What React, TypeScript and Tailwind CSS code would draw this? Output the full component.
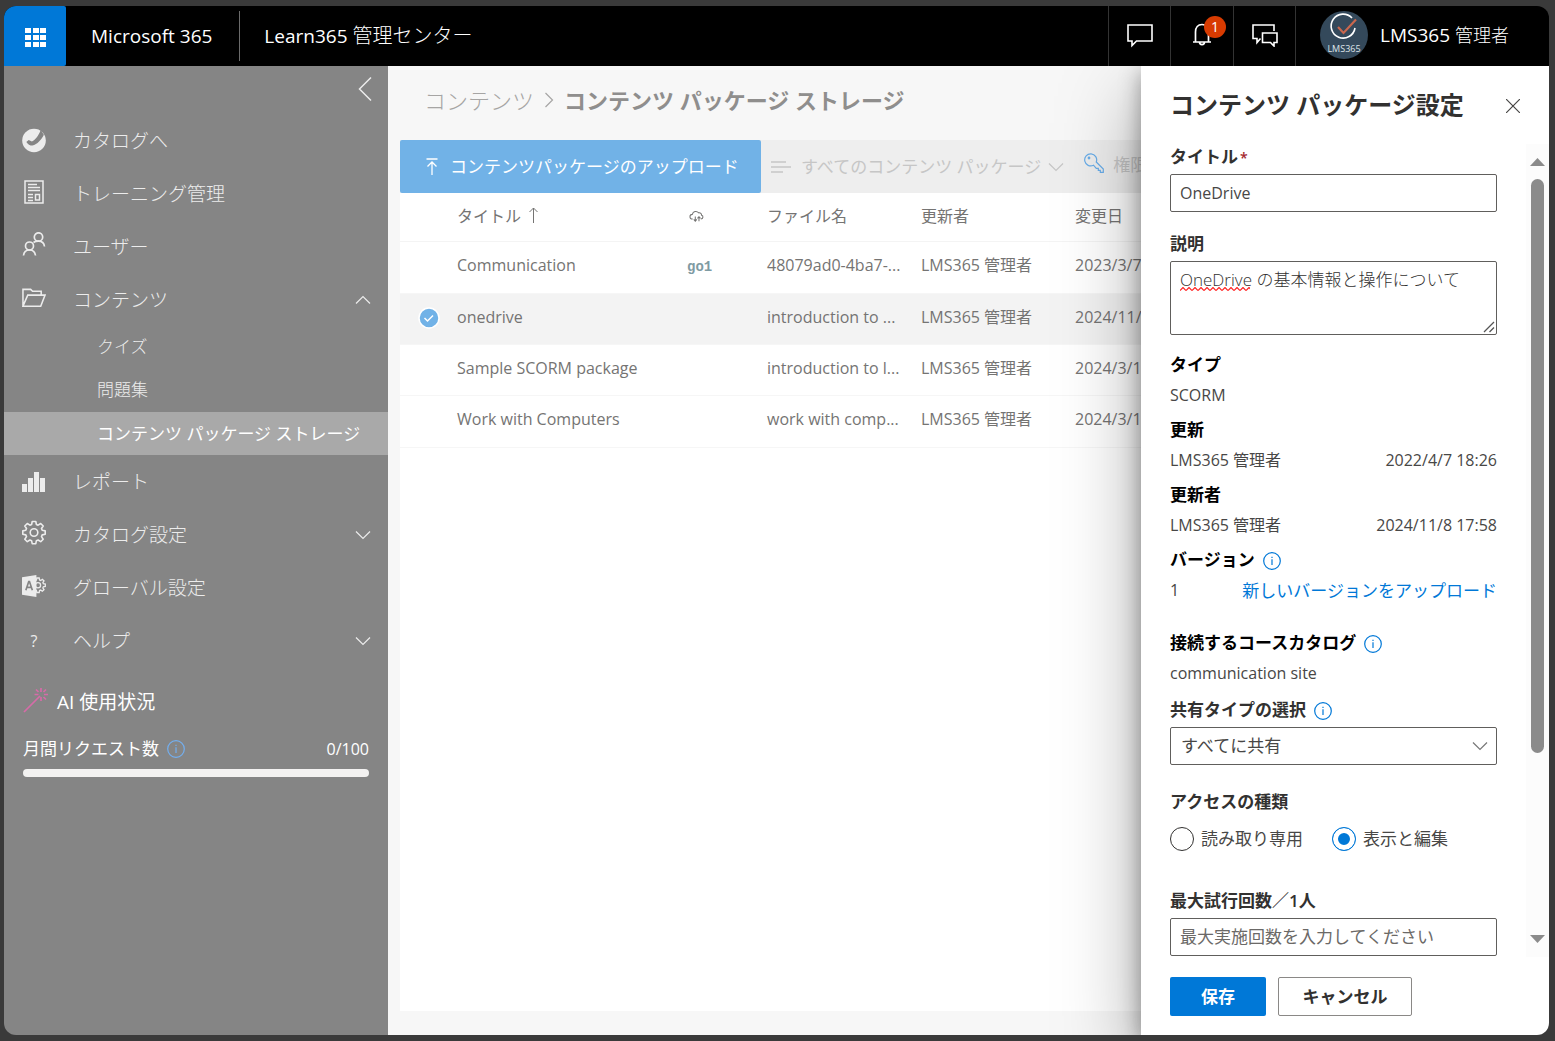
import React from "react";
import clsx from "clsx";

const ChevronIcon = ({ className }: { className?: string }) => (
	<svg viewBox="0 0 16 10" className={clsx("h-2.5 w-4", className)} fill="none" stroke="currentColor" strokeWidth="1.2">
		<path d="M1 1.5 8 8.5 15 1.5" />
	</svg>
);

const InfoIcon = ({ className }: { className?: string }) => (
	<svg viewBox="0 0 18 18" className={clsx("size-[18px]", className)} fill="none" stroke="currentColor" strokeWidth="1.2">
		<circle cx="9" cy="9" r="8.3" />
		<path d="M9 7.2V13M9 4.8v1.3" />
	</svg>
);

const gearPath =
	"M10.2 1h3.6l.6 3 1.7.7L18.7 3l2.5 2.5-1.7 2.5.7 1.8 3 .6v3.4l-3 .6-.7 1.7 1.7 2.6-2.5 2.5-2.6-1.7-1.7.7-.6 3h-3.6l-.6-3-1.7-.7-2.6 1.7-2.5-2.5 1.7-2.6-.7-1.7-3-.6v-3.4l3-.6.7-1.8L2.8 5.5 5.3 3l2.6 1.7L9.6 4z";

const CatalogIcon = () => (
	<svg viewBox="0 0 25 25" className="size-[25px]">
		<circle cx="12.5" cy="12.5" r="12.3" fill="#ececec" />
		<path d="M4.5 14 7 12l3.300 1.600c4-2.300 6.700-5.800 9.200-12.100l3.300 5c-2.800 5.500-6.500 9.700-12.100 11.300-2.400 0-4.600-1.300-6.200-3.800z" fill="#858585" />
	</svg>
);

const TrainingIcon = () => (
	<svg viewBox="0 0 20 24" className="mb-1 h-6 w-5" fill="none" stroke="#ececec" strokeWidth="1.5">
		<path d="M1 1h18v22H1z" />
		<path d="M4 4.5h9M4 7.5h12M4 10.5h12M4 14.5h5M4 17.5h5M4 20.5h5M11.5 14.5h4v5.5h-4z" />
	</svg>
);

const UsersIcon = () => (
	<svg viewBox="0 0 24 24" className="mb-1.5 size-6" fill="none" stroke="#ececec" strokeWidth="1.7">
		<circle cx="16.5" cy="5" r="4.2" />
		<circle cx="7.5" cy="14" r="4" />
		<path d="M1.5 23.5c.4-3.600 2.800-5.500 6-5.500s5.500 1.900 6 5.500M11.500 10.500c1.400-1 3-1.300 5-1.300 3.400 0 5.600 1.900 6 5.300" />
	</svg>
);

const FolderIcon = () => (
	<svg viewBox="0 0 25 20" className="mb-1 h-5 w-[25px]" fill="none" stroke="#ececec" strokeWidth="1.6">
		<path d="M1 18.5V1h8l2 2h9v4M1 18.5 6 7h18l-4.5 11.5z" />
	</svg>
);

const ReportIcon = () => (
	<svg viewBox="0 0 24 20" className="h-5 w-6" fill="#ececec">
		<path d="M0 12h5v8H0zM6 6h5v14H6zM12 0h5v20h-5zM18 6h5v14h-5z" />
	</svg>
);

const GearIcon = () => (
	<svg viewBox="0 0 24 24" className="mb-1 size-[25px]" fill="none" stroke="#ececec" strokeWidth="1.6">
		<path d={gearPath} strokeLinejoin="round" />
		<circle cx="12" cy="12" r="3.8" />
	</svg>
);

const GlobalIcon = () => (
	<svg viewBox="0 0 25 24" className="mb-1 h-6 w-[25px]">
		<g transform="translate(8.500 3) scale(.68)" fill="none" stroke="#ececec" strokeWidth="2">
			<path d={gearPath} />
			<circle cx="12" cy="12" r="4" />
		</g>
		<path d="M0 3 15 .5v23L0 21z" fill="#ececec" />
		<path d="m4 16.5 3-9h.8l3 9M5.3 13.5h4.500" fill="none" stroke="#858585" strokeWidth="1.7" />
	</svg>
);

const HelpIcon = () => <span className="text-base font-normal">?</span>;

const WandIcon = () => (
	<svg viewBox="0 0 26 26" className="mb-1 size-[26px]" fill="none" stroke="#d66ba8" strokeWidth="1.7">
		<path d="M1 25 17 9" />
		<path d="M18 1v4M18 10v4M11.5 7.5h4M21 7.5h4M13 2.5 15.5 5M23 2.5 20.5 5M20.5 10l2.5 2.5" />
	</svg>
);

const navigation = [
	{ label: "カタログへ", icon: <CatalogIcon /> },
	{ label: "トレーニング管理", icon: <TrainingIcon /> },
	{ label: "ユーザー", icon: <UsersIcon /> },
	{
		label: "コンテンツ",
		icon: <FolderIcon />,
		open: true,
		children: ["クイズ", "問題集", "コンテンツ パッケージ ストレージ"],
	},
	{ label: "レポート", icon: <ReportIcon /> },
	{ label: "カタログ設定", icon: <GearIcon />, open: false },
	{ label: "グローバル設定", icon: <GlobalIcon /> },
	{ label: "ヘルプ", icon: <HelpIcon />, open: false },
];

const packages = [
	{ title: "Communication", go1: true, file: "48079ad0-4ba7-...", date: "2023/3/7" },
	{ title: "onedrive", selected: true, file: "introduction to ...", date: "2024/11/" },
	{ title: "Sample SCORM package", file: "introduction to l...", date: "2024/3/1" },
	{ title: "Work with Computers", file: "work with comp...", date: "2024/3/1" },
];

const Header = () => (
	<header className="relative z-20 flex h-[60px] shrink-0 items-stretch bg-black text-white">
		<button aria-label="アプリ起動ツール" className="flex w-[62px] items-center justify-center rounded-r-xs bg-[#0078d7]">
			<svg viewBox="0 0 21 19" className="mt-0.5 h-[19px] w-[21px]" fill="white">
				<path d="M0 0h6v5H0zM8 0h6v5H8zM15 0h6v5h-6zM0 7h6v5H0zM8 7h6v5H8zM15 7h6v5h-6zM0 14h6v5H0zM8 14h6v5H8zM15 14h6v5h-6z" />
			</svg>
		</button>
		<a href="#" className="flex items-center pr-[27px] pl-[25px] text-[19px]">
			Microsoft 365
		</a>
		<div className="my-[5px] w-px bg-[#6b6b6b]" />
		<a href="#" className="flex items-center px-6 text-[19px]">
			<span>
				Learn365 <span className="text-xl font-light">管理センター</span>
			</span>
		</a>
		<div className="ml-auto flex">
			<button aria-label="メッセージ" className="flex w-[62px] items-center justify-center border-l border-[#333]">
				<svg viewBox="0 0 26 24" className="h-6 w-[26px]" fill="none" stroke="white" strokeWidth="1.6">
					<path d="M1 1h24v16H9.5L5 21.5V17H1z" />
				</svg>
			</button>
			<button aria-label="通知" className="relative flex w-[63px] items-center justify-center border-l border-[#333]">
				<svg viewBox="0 0 20 24" className="mb-1 h-6 w-5" fill="none" stroke="white" strokeWidth="1.7">
					<path d="M1 20h18M3.5 20V10c0-4.500 2.500-7.500 6.500-7.500s6.500 3 6.500 7.500v10M7.500 20c0 3.500 5 3.500 5 0" />
				</svg>
				<span className="absolute top-2.5 right-[7px] flex size-[22px] items-center justify-center rounded-full bg-[#d83b01] text-sm">
					1
				</span>
			</button>
			<button aria-label="チャット" className="flex w-[62px] items-center justify-center border-l border-[#333]">
				<svg viewBox="0 0 26 24" className="mb-0.5 h-6 w-[26px]" fill="none" stroke="white" strokeWidth="1.6">
					<path d="M8.5 15.5 5 19.5v-4H1V2h21v6" />
					<path d="M10.5 10h14.5v9.500H22v3.500l-3.500-3.500h-8z" />
				</svg>
			</button>
			<button className="flex items-center gap-3 border-l border-[#333] pr-10 pb-0.5 pl-6 text-[19px]">
				<svg viewBox="0 0 48 48" className="size-12">
					<circle cx="24" cy="24" r="24" fill="#34495b" />
					<path d="M32 7A12 12 0 1 0 35 17" fill="none" stroke="white" strokeWidth="1.6" />
					<path d="m18 16 5.500 6L36 8.500" fill="none" stroke="#c9674e" strokeWidth="2.2" />
					<text x="24" y="41" textAnchor="middle" fontSize="9" fill="#dfe5ea">
						LMS365
					</text>
				</svg>
				<span>
					LMS365 <span className="text-lg font-light">管理者</span>
				</span>
			</button>
		</div>
	</header>
);

const Sidebar = () => (
	<aside className="w-96 shrink-0 bg-[#858585] text-[#ececec]">
		<div className="flex h-12 justify-end px-4 pt-2.5">
			<button aria-label="メニューを閉じる" className="h-[26px]">
				<svg viewBox="0 0 14 26" className="h-[26px] w-3.5" fill="none" stroke="currentColor" strokeWidth="1.5">
					<path d="M13 1.5 1.5 13 13 24.5" />
				</svg>
			</button>
		</div>
		<nav>
			{navigation.map((item) => (
				<React.Fragment key={item.label}>
					<a href="#" className="flex h-[53px] items-center pr-[17px] pl-[18px] text-[19px] font-light">
						<span className="flex w-6 shrink-0 justify-center">{item.icon}</span>
						<span className="ml-[27px] pt-px">{item.label}</span>
						{item.open !== undefined && (
							<ChevronIcon className={clsx("ml-auto", item.open && "rotate-180")} />
						)}
					</a>
					{item.children?.map((child, index) => (
						<a
							key={child}
							href="#"
							className={clsx(
								"flex h-[43px] items-center pl-[93px] text-[17px]",
								index === 2 ? "bg-[#a9a9a9] text-white" : "pb-px font-light"
							)}
						>
							{child}
						</a>
					))}
				</React.Fragment>
			))}
		</nav>
		<section className="px-[19px] pt-5 text-white">
			<h2 className="flex items-center gap-2 text-[19px] leading-[26px]">
				<WandIcon />
				AI 使用状況
			</h2>
			<div className="mt-5 flex items-center text-[17px] leading-6">
				<span id="monthly-requests">月間リクエスト数</span>
				<InfoIcon className="ml-2 text-[#73aff0]" />
				<span className="ml-auto text-base">0/100</span>
			</div>
			<div role="progressbar" aria-labelledby="monthly-requests" aria-valuenow={0} className="mt-2 h-2 rounded-full bg-[#f3f2f1]" />
		</section>
	</aside>
);

const PackageTable = () => (
	<table className="w-[850px] table-fixed text-left text-base text-[#757473]">
		<colgroup>
			<col className="w-[57px]" />
			<col className="w-[230px]" />
			<col className="w-20" />
			<col className="w-[154px]" />
			<col className="w-[154px]" />
			<col />
		</colgroup>
		<thead>
			<tr className="h-12 border-b border-[#f4f4f4] *:pb-0.5 *:font-normal">
				<td />
				<th>
					<span className="flex items-center gap-2">
						タイトル
						<svg viewBox="0 0 9 16" className="mb-0.5 h-4 w-[9px]" fill="none" stroke="currentColor">
							<path d="M4.5 16V1M.5 5l4-4 4 4" />
						</svg>
					</span>
				</th>
				<th aria-label="ソース">
					<svg viewBox="0 0 18 14" className="ml-0.5 h-3 w-4" fill="none" stroke="currentColor" strokeWidth="1.2">
						<path d="M4 10.5H3.5a2.700 2.700 0 0 1 0-5.400C4.500 1.500 8.500.5 11 3.300c2-.5 3.500 1 3.300 2.700 2.300.3 2.300 4.500-.8 4.500" />
						<path d="M7 7.5V13M5.2 11 7 13l1.800-2M11.300 13V8M9.500 9.700l1.800-1.900 1.800 1.900" />
					</svg>
				</th>
				<th>ファイル名</th>
				<th>更新者</th>
				<th>変更日</th>
			</tr>
		</thead>
		<tbody>
			{packages.map((item) => (
				<tr
					key={item.title}
					className={clsx(
						"h-[51px] border-b border-[#f6f6f6] *:pb-1 first:h-[52px] last:h-[52px]",
						item.selected && "bg-[#f3f3f3]"
					)}
				>
					<td className="pt-0.5 pl-[18px]">
						{item.selected && (
							<svg viewBox="0 0 22 22" className="size-[22px]" role="img" aria-label="選択済み">
								<circle cx="11" cy="11" r="10" fill="#71b2e7" stroke="white" strokeWidth="1.5" />
								<path d="m6.5 11 3 3 5.500-5.500" fill="none" stroke="white" strokeWidth="1.5" />
							</svg>
						)}
					</td>
					<td>{item.title}</td>
					<td>
						{item.go1 && (
							<span className="font-['Liberation_Mono'] text-sm font-bold text-[#7f9ba3]">go1</span>
						)}
					</td>
					<td>{item.file}</td>
					<td>LMS365 管理者</td>
					<td>{item.date}</td>
				</tr>
			))}
		</tbody>
	</table>
);

const Content = () => (
	<main className="flex min-w-0 flex-1 flex-col overflow-hidden bg-[#f7f7f7] pb-6 pl-3">
		<nav className="flex h-[74px] shrink-0 items-center pb-1.5 pl-6 text-[22px] whitespace-nowrap">
			<a href="#" className="font-light text-[#a6a5a4]">
				コンテンツ
			</a>
			<ChevronIcon className="mx-[7px] -rotate-90 text-[#a6a5a4]" />
			<h1 className="font-semibold text-[#8f8e8d]">コンテンツ パッケージ ストレージ</h1>
		</nav>
		<div className="flex h-[53px] shrink-0 bg-[#eee] text-[17px] whitespace-nowrap text-[#c6c6c6]">
			<button className="flex w-[361px] shrink-0 items-center gap-3 rounded-xs bg-[#71b2e7] pl-[26px] text-white">
				<svg viewBox="0 0 12 17" className="h-[17px] w-3" fill="none" stroke="currentColor" strokeWidth="1.3">
					<path d="M.5 1h11M6 17V4M1.5 8.5 6 4l4.500 4.500" />
				</svg>
				コンテンツパッケージのアップロード
			</button>
			<button className="flex shrink-0 items-center pl-2.5">
				<svg viewBox="0 0 20 12" className="mr-2.5 h-3 w-5" fill="none" stroke="currentColor" strokeWidth="1.5">
					<path d="M0 1h15M0 6h20M0 11h12" />
				</svg>
				すべてのコンテンツ パッケージ
				<ChevronIcon className="ml-[7px]" />
			</button>
			<button className="flex shrink-0 items-center gap-[9px] pb-1 pl-5">
				<svg viewBox="0 0 20 20" className="mb-1 size-5" fill="none" stroke="#69ade9" strokeWidth="1.2">
					<path d="M9.5 12.2A6 6 0 1 1 12.300 9l7 7v3.300h-3v-2h-2v-2h-2z" />
					<circle cx="5" cy="5" r=".8" />
				</svg>
				権限
			</button>
		</div>
		<div className="flex-1 bg-white">
			<PackageTable />
		</div>
	</main>
);

const Detail = ({ label, children }: { label: React.ReactNode; children: React.ReactNode }) => (
	<div>
		<h3 className="flex items-center gap-2 text-[17px] font-semibold text-black">{label}</h3>
		<div className="mt-1.5 flex justify-between text-base">{children}</div>
	</div>
);

const SettingsPanel = () => (
	<section className="relative z-10 flex w-[408px] shrink-0 flex-col bg-white leading-6 text-[#484746] shadow-[0_30px_76px_rgba(0,0,0,0.35),0_6px_20px_rgba(0,0,0,0.35)]">
		<div className="flex h-[78px] shrink-0 items-center justify-between px-[29px]">
			<h2 className="text-2xl font-semibold text-[#323130]">コンテンツ パッケージ設定</h2>
			<button aria-label="閉じる">
				<svg viewBox="0 0 14 14" className="mt-0.5 size-3.5" fill="none" stroke="currentColor" strokeWidth="1.2">
					<path d="m0 0 14 14M14 0 0 14" />
				</svg>
			</button>
		</div>
		<div className="flex min-h-0 flex-1">
			<form className="min-w-0 flex-1 overflow-hidden px-[29px] pt-px">
				<label htmlFor="title" className="block text-[17px] font-semibold text-[#323130]">
					タイトル<span className="ml-0.5 text-sm text-[#a4262c]">*</span>
				</label>
				<input
					id="title"
					defaultValue="OneDrive"
					className="mt-[5px] block h-[38px] w-full rounded-xs border border-[#605e5c] px-[9px] text-base"
				/>
				<label htmlFor="description" className="mt-5 block text-[17px] font-semibold text-[#323130]">
					説明
				</label>
				<div className="relative mt-[5px]">
					<textarea
						id="description"
						defaultValue="OneDrive の基本情報と操作について"
						className="block h-[74px] w-full resize-none rounded-xs border border-[#605e5c] px-[9px] py-1.5 text-[17px] font-light text-[#323130]"
					/>
					<svg className="absolute top-[26px] left-2.5 h-1 w-[70px]">
						<defs>
							<pattern id="wave" width="6" height="4" patternUnits="userSpaceOnUse">
								<path d="M0 3.5 3 .5l3 3" fill="none" stroke="#f22" strokeWidth="1.2" />
							</pattern>
						</defs>
						<rect width="70" height="4" fill="url(#wave)" />
					</svg>
					<svg viewBox="0 0 12 12" className="absolute right-0.5 bottom-0.5 size-3" stroke="#555" strokeWidth="1.3">
						<path d="M1 11 11 1M6.5 11 11 6.5" />
					</svg>
				</div>
				<div className="mt-[18px] grid gap-[11px]">
					<Detail label="タイプ">SCORM</Detail>
					<Detail label="更新">
						<span>LMS365 管理者</span>
						<span>2022/4/7 18:26</span>
					</Detail>
					<Detail label="更新者">
						<span>LMS365 管理者</span>
						<span>2024/11/8 17:58</span>
					</Detail>
					<Detail label={<>バージョン <InfoIcon className="mt-0.5 text-[#0078d7]" /></>}>
						<span>1</span>
						<a href="#" className="text-[17px] text-[#0078d7]">
							新しいバージョンをアップロード
						</a>
					</Detail>
				</div>
				<div className="mt-[27px] grid gap-[13px]">
					<Detail label={<>接続するコースカタログ <InfoIcon className="mt-0.5 text-[#0078d7]" /></>}>
						communication site
					</Detail>
					<label htmlFor="sharing" className="flex items-center gap-2 text-[17px] font-semibold text-[#323130]">
						共有タイプの選択 <InfoIcon className="mt-0.5 text-[#0078d7]" />
					</label>
				</div>
				<div className="relative mt-[5px]">
					<select
						id="sharing"
						className="block h-[38px] w-full appearance-none rounded-xs border border-[#605e5c] px-2.5 text-[17px]"
					>
						<option>すべてに共有</option>
					</select>
					<ChevronIcon className="pointer-events-none absolute top-3.5 right-[9px] text-[#777]" />
				</div>
				<fieldset className="mt-[25px]">
					<legend className="text-[17px] font-semibold text-[#323130]">アクセスの種類</legend>
					<div className="mt-[13px] flex gap-[29px] text-[17px]">
						<label className="flex items-center gap-[7px]">
							<input type="radio" name="access" className="size-6 appearance-none rounded-full border border-[#323130]" />
							読み取り専用
						</label>
						<label className="flex items-center gap-[7px]">
							<input
								type="radio"
								name="access"
								defaultChecked
								className="size-6 appearance-none rounded-full border border-[#0078d7] bg-[#0078d7] shadow-[inset_0_0_0_5px_white]"
							/>
							表示と編集
						</label>
					</div>
				</fieldset>
				<label htmlFor="attempts" className="mt-[38px] block text-[17px] font-semibold text-[#323130]">
					最大試行回数／1人
				</label>
				<input
					id="attempts"
					placeholder="最大実施回数を入力してください"
					className="mt-[5px] block h-[38px] w-full rounded-xs border border-[#605e5c] px-[9px] text-[17px] placeholder:text-[#6b6967]"
				/>
			</form>
			<div className="flex w-[23px] shrink-0 flex-col items-center bg-[#fcfcfc] py-3.5 text-[#8b8b8b]">
				<svg viewBox="0 0 15 8" className="h-2 w-[15px]" fill="currentColor">
					<path d="M7.5 0 15 8H0z" />
				</svg>
				<div className="mt-[13px] h-[574px] w-[13px] rounded-full bg-[#8b8b8b]" />
				<svg viewBox="0 0 15 8" className="mt-auto h-2 w-[15px]" fill="currentColor">
					<path d="M0 0h15L7.5 8z" />
				</svg>
			</div>
		</div>
		<div className="flex gap-3 pt-5 pb-[19px] pl-[29px] text-[17px] font-semibold">
			<button className="h-[39px] w-24 rounded-xs bg-[#0078d7] text-white">保存</button>
			<button className="h-[39px] w-[134px] rounded-xs border border-[#8a8886] text-[#323130]">キャンセル</button>
		</div>
	</section>
);

const App = () => {
	return (
		<div className="h-screen bg-[#3a3a3a] pt-1.5 pr-1.5 pb-1.5 pl-1 font-['Open_Sans','Noto_Sans_CJK_JP',sans-serif]">
			<div className="flex h-full flex-col overflow-hidden rounded-xl">
				<Header />
				<div className="flex min-h-0 flex-1">
					<Sidebar />
					<Content />
					<SettingsPanel />
				</div>
			</div>
		</div>
	);
};

export default App;
